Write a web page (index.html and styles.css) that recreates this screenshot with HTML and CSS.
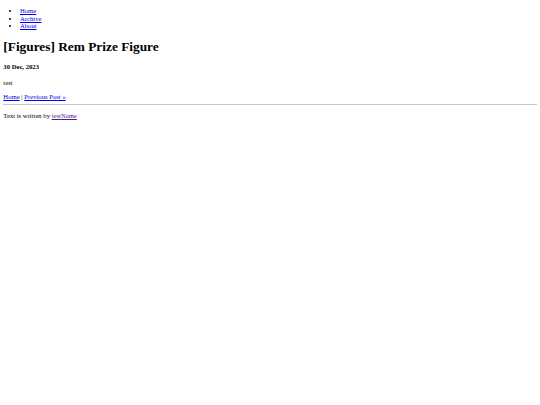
FILE: index.html
```html
<!DOCTYPE html>
<html lang="en">
<head>
    <title>[Figures] Rem Prize Figure</title>
    <link rel="stylesheet" href="styles.css">
</head>
<body>
    <!-- Top navigation -->
    <ul class="nav">
        <li><a href="#">Home</a></li>
        <li><a href="#">Archive</a></li>
        <li><a href="#">About</a></li>
    </ul>

    <h1 class="post-title">[Figures] Rem Prize Figure</h1>
    <h4 class="post-date">30 Dec, 2023</h4>

    <div class="post-body">
        <p>test</p>
    </div>

    <div class="post-nav"><a href="#">Home</a> | <a href="#">Previous Post &raquo;</a></div>

    <hr>

    <p class="footer">
        Text is written by <a href="#" class="visited">testName</a>
    </p>
</body>
</html>
```

FILE: styles.css
```css
body {
    font-family: "Liberation Serif", "Times New Roman", serif;
    font-size: 6.67px;
    line-height: 7.5px;
    margin: 3.33px;
    color: #000;
    background-color: #fff;
}

a {
    color: #0000ee;
}

a.visited {
    color: #551a8b;
}

.nav {
    margin: 4px 0 6.67px;
    padding-left: 16.67px;
}

.post-title {
    font-size: 13.33px;
    line-height: 15px;
    margin: 8.93px 0;
}

.post-date {
    font-size: 6.67px;
    margin: 8.87px 0;
}

.post-body p {
    margin: 6.67px 0;
}

.post-nav {
    margin: 0;
}

hr {
    border: none;
    border-top: 1px solid #c8c8c8;
    margin: 3.33px 0;
}

.footer {
    margin: 6.67px 0;
}
```
